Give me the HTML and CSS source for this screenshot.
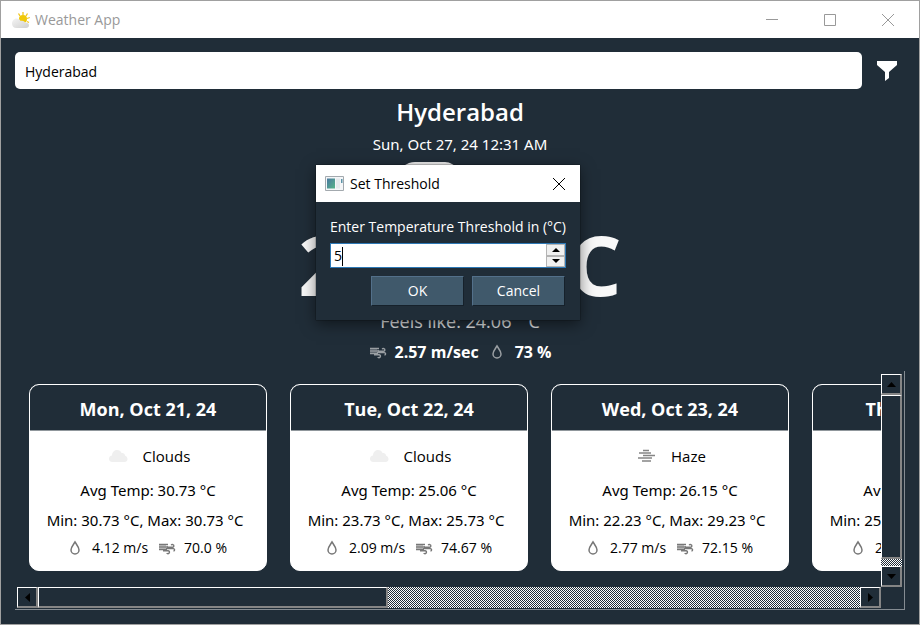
FILE: index.html
```html
<!DOCTYPE html>
<html lang="en">
<head>
<meta charset="utf-8">
<title>Weather App</title>
<link rel="stylesheet" href="styles.css">
</head>
<body>
<svg class="defs" aria-hidden="true">
  <defs>
    <linearGradient id="cloud-shade" x1="0" y1="0" x2="1" y2="1">
      <stop offset="0" stop-color="#f4f4f4"/><stop offset="1" stop-color="#cfcfcf"/>
    </linearGradient>
    <linearGradient id="photo" x1="0" y1="0" x2="1" y2="1">
      <stop offset="0" stop-color="#4a78a0"/><stop offset="1" stop-color="#55b488"/>
    </linearGradient>
  </defs>
  <symbol id="drop" viewBox="0 0 12 16">
    <path d="M6 2C4.500 4.500 2 7 2 10a4 4 0 0 0 8 0C10 7 7.500 4.500 6 2Z" fill="none" stroke="currentColor" stroke-width="1.500"/>
  </symbol>
  <symbol id="wind" viewBox="0 0 18 16">
    <path d="M1 4.500H10M1 7H10M1 9.500H9" fill="none" stroke="currentColor" stroke-width="1.500"/>
    <path d="M1 5.800H8M1 8.200H8" fill="none" stroke="currentColor" stroke-width="1" opacity=".6"/>
    <path d="M9 7.300h5.500a1.400 1.400 0 1 0-1.300-2M8 8.600h7.200a1.200 1.200 0 0 1 .3 2.400M5 10.700h5a1.500 1.500 0 1 1-1.300 2.300" fill="none" stroke="currentColor" stroke-width="1.400"/>
  </symbol>
  <symbol id="cloud" viewBox="0 0 20 14">
    <path d="M4.500 13C2 13 1 11.500 1 9.700 1 8 2.200 6.700 4 6.500 4 3.500 6 1 9 1c2.200 0 3.800 1.200 4.600 3 2-.3 3.400 1 3.600 2.700C18.600 7.200 19.500 8.300 19.500 10c0 1.800-1.200 3-3 3Z" fill="#efefef"/>
  </symbol>
  <symbol id="haze" viewBox="0 0 20 14">
    <path d="M7 1.500h6M3 4h12M7 6.500h12M2 9h14M6 12h9" fill="none" stroke="#858585" stroke-width="1.300"/>
  </symbol>
</svg>

<div class="window">
  <header class="titlebar">
    <svg class="app-icon" viewBox="0 0 20 18" aria-hidden="true">
      <path d="M12 1v3M7.500 2.500 9 5M16.500 2.500 15 5M18.800 6.500 16 7.500M18 11.500l-2-1" stroke="#f2c61f" stroke-width="1.300"/>
      <circle cx="12" cy="8" r="4" fill="#f0c808"/>
      <path d="M5.500 17C2.500 17 1 15 1 12.500 1 10 3 7.500 5.500 7.500c2 0 3.500 1 4.200 2.500 2-.6 3.800.2 4.300 1.500 2.200-.2 4 .8 4 2.800 0 1.700-1.300 2.700-3 2.700Z" fill="url(#cloud-shade)"/>
    </svg>
    <span class="titlebar-text">Weather App</span>
    <div class="window-controls">
      <button type="button" aria-label="Minimize"><svg viewBox="0 0 12 12"><path d="M0 5.500h12"/></svg></button>
      <button type="button" aria-label="Maximize"><svg viewBox="0 0 12 12"><path d="M.5.5h11v11H.5Z"/></svg></button>
      <button type="button" aria-label="Close"><svg viewBox="0 0 12 12"><path d="m0 0 12 12m0-12-12 12"/></svg></button>
    </div>
  </header>

  <main class="content">
    <form class="search">
      <input type="text" value="Hyderabad" aria-label="City">
      <button type="button" aria-label="Filter"><svg viewBox="0 0 20 20"><path d="M0 0h20v4l-8 7v6l-4 3V11L0 4Z" fill="#fff"/></svg></button>
    </form>

    <section class="current">
      <h1>Hyderabad</h1>
      <p class="date">Sun, Oct 27, 24 12:31 AM</p>
      <svg class="condition" viewBox="0 0 110 64" aria-hidden="true">
        <path d="M20 64A18 18 0 0 1 20 28C20 16 24 5 34 1q3-1 6-1h30q4 0 7 2c8 4 12 12 13 24a19 19 0 0 1 0 38Z" fill="#ececec"/>
      </svg>
      <p class="temperature">24.06 °C</p>
      <p class="feels">Feels like: 24.06 ° C</p>
      <p class="metrics">
        <svg class="wind"><use href="#wind"/></svg><span>2.57 m/sec</span>
        <svg class="drop"><use href="#drop"/></svg><span>73 %</span>
      </p>
    </section>

    <section class="scroll-area">
      <div class="cards">
        <article class="card">
          <h2>Mon, Oct 21, 24</h2>
          <p class="sky"><svg><use href="#cloud"/></svg><span>Clouds</span></p>
          <p class="average">Avg Temp: 30.73 °C</p>
          <p class="range">Min: 30.73 °C, Max: 30.73 °C</p>
          <p class="stats"><svg class="drop"><use href="#drop"/></svg><span>4.12 m/s</span><svg class="wind"><use href="#wind"/></svg><span>70.0 %</span></p>
        </article>
        <article class="card">
          <h2>Tue, Oct 22, 24</h2>
          <p class="sky"><svg><use href="#cloud"/></svg><span>Clouds</span></p>
          <p class="average">Avg Temp: 25.06 °C</p>
          <p class="range">Min: 23.73 °C, Max: 25.73 °C</p>
          <p class="stats"><svg class="drop"><use href="#drop"/></svg><span>2.09 m/s</span><svg class="wind"><use href="#wind"/></svg><span>74.67 %</span></p>
        </article>
        <article class="card">
          <h2>Wed, Oct 23, 24</h2>
          <p class="sky"><svg><use href="#haze"/></svg><span>Haze</span></p>
          <p class="average">Avg Temp: 26.15 °C</p>
          <p class="range">Min: 22.23 °C, Max: 29.23 °C</p>
          <p class="stats"><svg class="drop"><use href="#drop"/></svg><span>2.77 m/s</span><svg class="wind"><use href="#wind"/></svg><span>72.15 %</span></p>
        </article>
        <article class="card">
          <h2>Thu, Oct 24, 24</h2>
          <p class="sky"></p>
          <p class="average">Avg Temp: 25.15 °C</p>
          <p class="range">Min: 25.23 °C, Max: 25.23 °C</p>
          <p class="stats"><svg class="drop"><use href="#drop"/></svg><span>2.12 m/s</span><svg class="wind"><use href="#wind"/></svg><span>70.2 %</span></p>
        </article>
      </div>
      <div class="bar vertical">
        <button type="button" aria-label="Scroll up"><svg viewBox="0 0 9 5"><path d="M0 5 4.500 0 9 5Z"/></svg></button>
        <div class="thumb"></div>
        <div class="track"></div>
        <button type="button" aria-label="Scroll down"><svg viewBox="0 0 9 5"><path d="M0 0h9L4.500 5Z"/></svg></button>
      </div>
      <div class="bar horizontal">
        <button type="button" aria-label="Scroll left"><svg viewBox="0 0 5 9"><path d="M5 0v9L0 4.500Z"/></svg></button>
        <div class="thumb"></div>
        <div class="track"></div>
        <button type="button" aria-label="Scroll right"><svg viewBox="0 0 5 9"><path d="M0 0v9l5-4.500Z"/></svg></button>
      </div>
    </section>
  </main>

  <form class="dialog" role="dialog" aria-labelledby="dialog-title">
    <header class="dialog-bar">
      <svg class="dialog-icon" viewBox="0 0 19 15" aria-hidden="true">
        <path d="M.5.5h18v14H.5Z" fill="#f4f6f8" stroke="#a3a9ae"/>
        <path d="M2 2.500h8v10H2Z" fill="url(#photo)"/>
        <path d="M11 2.500h4v10h-4Z" fill="#e4e9ec"/>
        <path d="M16 3h1.500v4H16Z" fill="#5c93a8"/>
      </svg>
      <span id="dialog-title">Set Threshold</span>
      <button type="button" aria-label="Close dialog"><svg viewBox="0 0 12 12"><path d="m0 0 12 12m0-12-12 12"/></svg></button>
    </header>
    <div class="dialog-body">
      <label for="threshold">Enter Temperature Threshold in (°C)</label>
      <div class="spinbox">
        <input id="threshold" type="number" value="5">
        <span class="caret"></span>
        <div class="steps">
          <button type="button" aria-label="Increase"><svg viewBox="0 0 8 4"><path d="M0 4 4 0l4 4Z"/></svg></button>
          <button type="button" aria-label="Decrease"><svg viewBox="0 0 8 4"><path d="M0 0h8L4 4Z"/></svg></button>
        </div>
      </div>
      <div class="actions">
        <button type="button">OK</button>
        <button type="button">Cancel</button>
      </div>
    </div>
  </form>
</div>
</body>
</html>
```
FILE: styles.css
```css
* { box-sizing: border-box; }

:root {
  --navy: #202d38;
  --checker: repeating-conic-gradient(var(--navy) 0 25%, #fff 0 50%) 0 0 / 2px 2px;
}

body {
  margin: 0;
  font: 14px/20px "Open Sans", "Noto Sans", sans-serif;
  color: #000;
}

h1, h2, p { margin: 0; }
button { padding: 0; border: 0; background: none; font: inherit; color: inherit; }
input { font: inherit; color: inherit; }
svg { display: block; flex: none; }

.defs { position: absolute; width: 0; height: 0; }

.window {
  position: relative;
  display: flex;
  flex-direction: column;
  min-height: 100vh;
  border: 1px solid #a0a0a0;
  background: var(--navy);
}

.titlebar {
  display: flex;
  align-items: center;
  height: 37px;
  padding: 0 2px 0 10px;
  background: #fff;
  color: #999;
}
.app-icon { width: 20px; height: 18px; margin-right: 4px; }
.window-controls { display: flex; margin-left: auto; }
.window-controls button {
  display: grid;
  place-items: center;
  width: 58px;
  height: 37px;
}
.window-controls svg, .dialog-bar button svg {
  width: 12px;
  height: 12px;
  fill: none;
  stroke: currentColor;
}

.content {
  display: flex;
  flex: 1;
  flex-direction: column;
  padding: 14px;
}

.search { display: flex; align-items: center; gap: 15px; padding-right: 8px; }
.search input {
  flex: 1;
  min-width: 0;
  height: 37px;
  padding: 2px 10px 0;
  border: 0;
  border-radius: 5px;
  background: #fff;
}
.search button svg { width: 20px; height: 20px; }

.current {
  display: flex;
  flex-direction: column;
  align-items: center;
  color: #fff;
}
.current h1 { margin-top: 7px; font-size: 24px; line-height: 32px; font-weight: 600; }
.date { margin-top: 6px; font-family: "Noto Sans", sans-serif; font-size: 15px; }
.condition { width: 110px; height: 64px; margin: 8px 60px 0 0; }
.temperature { font-size: 83px; line-height: 76px; font-weight: 700; color: #f8f8f8; }
.feels { margin-top: 7px; font-size: 18px; line-height: 24px; color: #e0e2e4; }
.metrics { display: flex; align-items: center; margin-top: 9px; font-size: 16px; font-weight: 700; }
.metrics svg { color: #9a9fa3; }
.wind { width: 18px; height: 16px; }
.drop { width: 12px; height: 16px; }
.metrics .wind { margin-right: 8px; }
.metrics .drop { margin: 0 12px; }

.scroll-area {
  display: grid;
  flex: 1;
  grid-template-columns: minmax(0, 1fr) 21px;
  grid-template-rows: 1fr 21px;
  margin-top: 9px;
  padding: 3px 2px 1px;
  border: solid #858c92;
  border-width: 0 1px 1px 0;
}
.cards {
  display: flex;
  gap: 23px;
  padding: 10px 0 16px 12px;
  overflow: hidden;
}
.card {
  display: flex;
  flex: none;
  flex-direction: column;
  align-items: center;
  width: 238px;
  padding-bottom: 11px;
  border: 1px solid #fff;
  border-radius: 10px;
  background: #fff;
}
.card h2 {
  align-self: stretch;
  padding: 12px 0 9px;
  border-bottom: 1px solid #90979c;
  border-radius: 9px 9px 0 0;
  background: var(--navy);
  color: #fff;
  font-size: 18px;
  line-height: 24px;
  text-align: center;
}
.sky {
  display: flex;
  align-items: center;
  gap: 15px;
  height: 20px;
  margin-top: 15px;
  padding-left: 2px;
  font-size: 15px;
}
.sky svg { width: 20px; height: 14px; }
.average, .range { font-family: "Noto Sans", sans-serif; font-size: 15px; white-space: nowrap; }
.average { margin-top: 14px; }
.range { margin-top: 10px; padding-right: 6px; }
.stats { display: flex; align-items: center; margin-top: 8px; }
.stats svg { color: #777; }
.stats .drop { margin-right: 11px; }
.stats .wind { margin: 0 8px 0 10px; }

.bar { display: flex; }
.bar.vertical { flex-direction: column; }
.bar.horizontal { grid-row: 2; }
.bar button {
  display: grid;
  flex: none;
  place-items: center;
  width: 21px;
  height: 21px;
}
.bar button, .thumb {
  border: solid;
  border-width: 1px 2px 2px 1px;
  border-color: #fff #858585 #858585 #fff;
}
.bar svg { width: 9px; height: 5px; }
.bar.horizontal svg { width: 5px; height: 9px; }
.track { background: var(--checker); }
.vertical .thumb { flex: 1; }
.vertical .track { height: 7px; }
.horizontal .thumb { flex: 349; }
.horizontal .track { flex: 474; }

.dialog {
  position: absolute;
  top: 164px;
  left: 315px;
  width: 264px;
  background: var(--navy);
  box-shadow: 0 4px 14px rgba(0, 0, 0, .5), 0 0 1px #000;
}
.dialog-bar {
  display: flex;
  align-items: center;
  height: 37px;
  padding: 0 15px 0 9px;
  background: #fff;
}
.dialog-icon { width: 19px; height: 15px; margin-right: 6px; }
.dialog-bar button { margin-left: auto; }
.dialog-body { padding: 14px; color: #fff; }
.dialog-body label { display: block; line-height: 22px; white-space: nowrap; }
.spinbox {
  position: relative;
  display: flex;
  height: 25px;
  margin-top: 5px;
  border: 1px solid #2d78b5;
  background: #fff;
  color: #000;
}
.spinbox input {
  flex: 1;
  min-width: 0;
  padding: 0 3px;
  border: 0;
  outline: 0;
  background: none;
  appearance: textfield;
}
.spinbox input::-webkit-inner-spin-button { display: none; }
.caret { position: absolute; top: 3px; left: 11px; width: 1px; height: 19px; background: #000; }
.steps { display: flex; flex-direction: column; width: 19px; background: #f0f0f0; }
.steps button {
  display: grid;
  flex: 1;
  place-items: center;
  border: 1px solid #b4b4b4;
}
.steps svg { width: 8px; height: 4px; }
.actions { display: flex; gap: 8px; justify-content: flex-end; margin-top: 8px; padding-right: 1px; }
.actions button {
  width: 93px;
  height: 30px;
  border: 1px solid;
  border-color: #53708a #16212b #16212b #53708a;
  background: #40596b;
}
```
